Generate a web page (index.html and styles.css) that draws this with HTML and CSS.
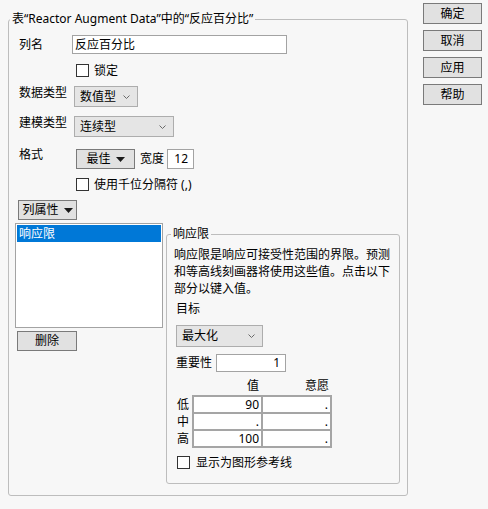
FILE: index.html
```html
<!DOCTYPE html>
<html lang="zh">
<head>
<meta charset="utf-8">
<link rel="stylesheet" href="styles.css">
</head>
<body>
<div class="dialog">
  <fieldset class="group main">
    <legend class="main-legend">表“Reactor Augment Data”中的“反应百分比”</legend>
    <div class="row r-name">
      <span class="lbl lbl-name">列名</span>
      <span class="field name-field">反应百分比</span>
    </div>
    <div class="row r-lock">
      <span class="cb"></span><span class="cb-text">锁定</span>
    </div>
    <div class="row r-combo r-dtype">
      <span class="lbl lbl-wide">数据类型</span>
      <span class="combo combo-dtype">数值型<svg class="chev" width="7" height="4" viewBox="0 0 7 4"><polyline points="0.5,0.5 3.5,3.5 6.5,0.5" fill="none" stroke="#6a6a6a" stroke-width="1"/></svg></span>
    </div>
    <div class="row r-combo r-mtype">
      <span class="lbl lbl-wide">建模类型</span>
      <span class="combo combo-mtype">连续型<svg class="chev" width="7" height="4" viewBox="0 0 7 4"><polyline points="0.5,0.5 3.5,3.5 6.5,0.5" fill="none" stroke="#6a6a6a" stroke-width="1"/></svg></span>
    </div>
    <div class="row r-fmt">
      <span class="lbl lbl-fmt">格式</span>
      <span class="btn btn-best">最佳<svg class="tri" width="9" height="5" viewBox="0 0 9 5"><polygon points="0,0 9,0 4.5,5" fill="#1a1a1a"/></svg></span>
      <span class="width-lbl">宽度</span>
      <span class="field width-field">12</span>
    </div>
    <div class="row r-sep">
      <span class="cb"></span><span class="cb-text">使用千位分隔符 (,)</span>
    </div>
    <div class="row r-colprop">
      <span class="btn btn-colprop">列属性<svg class="tri" width="9" height="5" viewBox="0 0 9 5"><polygon points="0,0 9,0 4.5,5" fill="#1a1a1a"/></svg></span>
    </div>
    <div class="bottom">
      <div class="left-col">
        <div class="listbox">
          <div class="list-item selected">响应限</div>
        </div>
        <span class="btn btn-delete">删除</span>
      </div>
      <fieldset class="group inner">
        <legend class="inner-legend">响应限</legend>
        <p class="desc">响应限是响应可接受性范围的界限。预测和等高线刻画器将使用这些值。点击以下部分以键入值。</p>
        <div class="goal-lbl">目标</div>
        <span class="combo combo-goal">最大化<svg class="chev" width="7" height="4" viewBox="0 0 7 4"><polyline points="0.5,0.5 3.5,3.5 6.5,0.5" fill="none" stroke="#6a6a6a" stroke-width="1"/></svg></span>
        <div class="row r-imp">
          <span class="imp-lbl">重要性</span>
          <span class="field imp-field">1</span>
        </div>
        <div class="tbl-head">
          <span class="th">值</span>
          <span class="th">意愿</span>
        </div>
        <div class="tbl">
          <div class="tbl-labels">
            <span>低</span><span>中</span><span>高</span>
          </div>
          <div class="cells">
            <span class="cell">90</span><span class="cell">.</span>
            <span class="cell">.</span><span class="cell">.</span>
            <span class="cell">100</span><span class="cell">.</span>
          </div>
        </div>
        <div class="row r-ref">
          <span class="cb"></span><span class="cb-text ref-text">显示为图形参考线</span>
        </div>
      </fieldset>
    </div>
  </fieldset>
  <div class="buttons">
    <span class="btn side-btn">确定</span>
    <span class="btn side-btn">取消</span>
    <span class="btn side-btn">应用</span>
    <span class="btn side-btn">帮助</span>
  </div>
</div>
</body>
</html>
```
FILE: styles.css
```css
html, body {
  margin: 0;
  padding: 0;
  background: #f7f7f7;
}
body {
  font-family: "Noto Sans", "Noto Sans CJK SC", sans-serif;
  font-size: 12px;
  line-height: 16px;
  color: #000;
  width: 488px;
  height: 509px;
  overflow: hidden;
}
.dialog {
  display: flex;
  align-items: flex-start;
  padding-left: 8px;
}
.group {
  margin: 0;
  padding: 0;
  border: 1px solid #bdbdbd;
  border-radius: 3px;
  min-width: 0;
  box-sizing: border-box;
}
.main {
  margin-top: 11px;
  width: 400px;
  height: 485px;
}
legend {
  padding: 0 2px;
  line-height: 16px;
  font-size: 12px;
}
.main-legend {
  margin-left: 1px;
}
.row {
  display: flex;
  align-items: center;
}
.lbl {
  box-sizing: border-box;
  padding-left: 10px;
  flex: none;
}
.r-name {
  margin-top: 8px;
  height: 19px;
}
.lbl-name {
  width: 63px;
}
.field {
  box-sizing: border-box;
  background: #fff;
  border: 1px solid #a3a3a3;
  display: flex;
  align-items: center;
}
.name-field {
  width: 215px;
  height: 19px;
  padding-left: 2px;
}
.cb {
  box-sizing: border-box;
  width: 13px;
  height: 13px;
  background: #fff;
  border: 1px solid #333;
  flex: none;
}
.cb-text {
  margin-left: 5px;
}
.r-lock {
  margin-top: 10px;
  height: 13px;
  padding-left: 67px;
}
.r-combo {
  align-items: flex-start;
  height: 21px;
}
.r-combo .lbl {
  margin-top: -1px;
}
.lbl-wide {
  width: 65px;
}
.r-dtype {
  margin-top: 9px;
}
.r-mtype {
  margin-top: 9px;
}
.combo {
  box-sizing: border-box;
  display: flex;
  align-items: center;
  justify-content: space-between;
  background: #e5e5e5;
  border: 1px solid #adadad;
  padding-left: 5px;
  padding-right: 7px;
  height: 21px;
}
.chev {
  display: block;
}
.combo-dtype {
  width: 64px;
}
.combo-mtype {
  width: 100px;
}
.btn {
  box-sizing: border-box;
  display: flex;
  align-items: center;
  justify-content: center;
  background: #e1e1e1;
  border: 1px solid #7a7a7a;
  height: 20px;
}
.tri {
  margin-left: 5px;
  display: block;
}
.r-fmt {
  margin-top: 12px;
  height: 20px;
  align-items: flex-start;
}
.lbl-fmt {
  width: 67px;
  margin-top: -2px;
}
.btn-best {
  width: 59px;
}
.width-lbl {
  margin-left: 5px;
  line-height: 20px;
}
.width-field {
  margin-left: 3px;
  width: 27px;
  height: 20px;
  justify-content: flex-end;
  padding-right: 5px;
}
.r-sep {
  margin-top: 9px;
  height: 13px;
  padding-left: 67px;
}
.r-colprop {
  margin-top: 9px;
  padding-left: 9px;
}
.btn-colprop {
  width: 59px;
}
.bottom {
  display: flex;
  align-items: flex-start;
  margin-top: 3px;
}
.left-col {
  margin-left: 6px;
  width: 148px;
}
.listbox {
  box-sizing: border-box;
  height: 105px;
  background: #fff;
  border: 1px solid #a3a3a3;
  padding: 1px;
}
.list-item {
  height: 17px;
  line-height: 17px;
  padding-left: 2px;
}
.selected {
  background: #0078d7;
  color: #fff;
}
.btn-delete {
  margin-top: 3px;
  margin-left: 2px;
  width: 60px;
}
.inner {
  margin-left: 3px;
  margin-top: 3px;
  width: 234px;
  height: 258px;
}
.inner-legend {
  margin-left: 4px;
}
.desc {
  margin: 4px 0 0 0;
  padding-left: 7px;
  width: 218px;
  line-height: 17px;
}
.goal-lbl {
  margin-top: 4px;
  padding-left: 9px;
}
.combo-goal {
  margin-top: 8px;
  margin-left: 9px;
  width: 87px;
  height: 22px;
}
.r-imp {
  margin-top: 7px;
  height: 18px;
  padding-left: 9px;
}
.imp-lbl {
  width: 40px;
}
.imp-field {
  width: 70px;
  height: 18px;
  justify-content: flex-end;
  padding-right: 5px;
}
.tbl-head {
  display: flex;
  margin-top: 6px;
  padding-left: 25px;
  height: 16px;
}
.th {
  width: 70px;
  text-align: right;
  padding-right: 3px;
  box-sizing: border-box;
}
.tbl {
  display: flex;
  margin-top: 1px;
  padding-left: 10px;
}
.tbl-labels {
  width: 15px;
  display: flex;
  flex-direction: column;
  padding-top: 1px;
}
.tbl-labels span {
  height: 17px;
  line-height: 17px;
}
.cells {
  display: grid;
  grid-template-columns: 69px 69px;
  grid-auto-rows: 17px;
  border: 1px solid #a5a5a5;
}
.cell {
  box-sizing: border-box;
  border: 1px solid #a5a5a5;
  background: #fff;
  text-align: right;
  padding-right: 2px;
  line-height: 15px;
}
.r-ref {
  margin-top: 8px;
  height: 13px;
  padding-left: 10px;
}
.ref-text {
  margin-left: 6px;
}
.buttons {
  display: flex;
  flex-direction: column;
  gap: 6px;
  margin-left: 15px;
  margin-top: 3px;
}
.side-btn {
  width: 59px;
  height: 21px;
}
```
